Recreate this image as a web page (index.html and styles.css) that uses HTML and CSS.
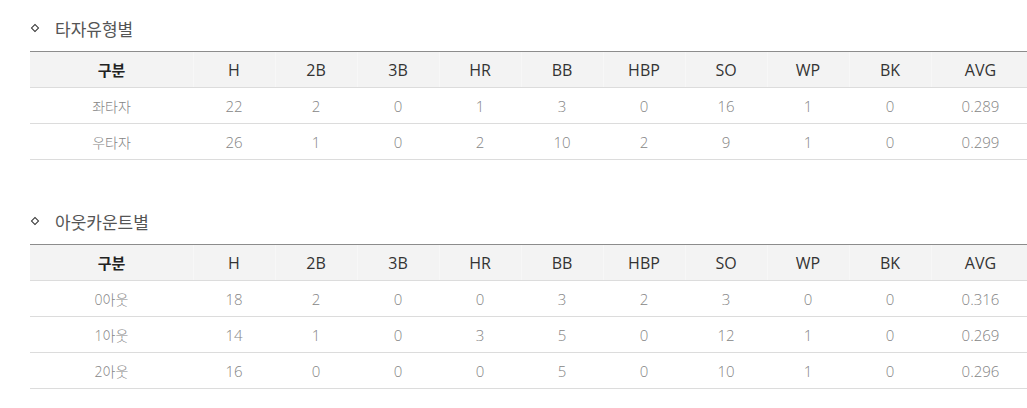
FILE: index.html
```html
<!DOCTYPE html>
<html lang="ko">
<head>
<meta charset="utf-8">
<link rel="stylesheet" href="styles.css">
</head>
<body>
<div class="page">
  <section class="block">
    <h3 class="title"><span class="bullet"></span>타자유형별</h3>
    <table class="stats">
      <colgroup><col class="w-name"><col span="9" class="w-num"><col class="w-avg"></colgroup>
      <thead>
        <tr><th class="c-name">구분</th><th>H</th><th>2B</th><th>3B</th><th>HR</th><th>BB</th><th>HBP</th><th>SO</th><th>WP</th><th>BK</th><th>AVG</th></tr>
      </thead>
      <tbody>
        <tr><td class="c-kr">좌타자</td><td>22</td><td>2</td><td>0</td><td>1</td><td>3</td><td>0</td><td>16</td><td>1</td><td>0</td><td>0.289</td></tr>
        <tr><td class="c-kr">우타자</td><td>26</td><td>1</td><td>0</td><td>2</td><td>10</td><td>2</td><td>9</td><td>1</td><td>0</td><td>0.299</td></tr>
      </tbody>
    </table>
  </section>
  <section class="block">
    <h3 class="title"><span class="bullet"></span>아웃카운트별</h3>
    <table class="stats">
      <colgroup><col class="w-name"><col span="9" class="w-num"><col class="w-avg"></colgroup>
      <thead>
        <tr><th class="c-name">구분</th><th>H</th><th>2B</th><th>3B</th><th>HR</th><th>BB</th><th>HBP</th><th>SO</th><th>WP</th><th>BK</th><th>AVG</th></tr>
      </thead>
      <tbody>
        <tr><td class="c-kr">0아웃</td><td>18</td><td>2</td><td>0</td><td>0</td><td>3</td><td>2</td><td>3</td><td>0</td><td>0</td><td>0.316</td></tr>
        <tr><td class="c-kr">1아웃</td><td>14</td><td>1</td><td>0</td><td>3</td><td>5</td><td>0</td><td>12</td><td>1</td><td>0</td><td>0.269</td></tr>
        <tr><td class="c-kr">2아웃</td><td>16</td><td>0</td><td>0</td><td>0</td><td>5</td><td>0</td><td>10</td><td>1</td><td>0</td><td>0.296</td></tr>
      </tbody>
    </table>
  </section>
</div>
</body>
</html>
```

FILE: styles.css
```css
html, body {
  margin: 0;
  padding: 0;
  background: #fff;
  overflow: hidden;
}
body {
  font-family: "Open Sans", "Noto Sans CJK KR", sans-serif;
  color: #333;
}
.page {
  width: 1000px;
  padding: 16px 0 0 30px;
}
.block {
  margin-bottom: 49px;
}
.block:last-child {
  margin-bottom: 0;
}
.title {
  display: flex;
  align-items: center;
  margin: 0 0 11px 0;
  height: 24px;
  font-size: 17px;
  font-weight: 400;
  color: #555;
  font-family: "Noto Sans CJK KR", sans-serif;
}
.bullet {
  display: inline-block;
  width: 4px;
  height: 4px;
  border: 1px solid #333;
  transform: rotate(45deg);
  margin: 0 17px 0 2px;
}
.stats {
  width: 1000px;
  border-collapse: collapse;
  table-layout: fixed;
  border-top: 1px solid #8c8c8c;
}
.w-name { width: 163px; }
.w-num { width: 82px; }
.w-avg { width: 99px; }
.stats th {
  height: 35px;
  padding: 0;
  background: #f3f3f3;
  font-weight: 400;
  font-size: 16px;
  color: #333;
  border-bottom: 1px solid #dcdcdc;
  box-shadow: inset 1px 0 #f7f7f7;
  text-align: center;
}
.stats th:first-child { box-shadow: none; }
.stats th.c-name {
  font-family: "Noto Sans CJK KR", sans-serif;
  font-size: 15px;
  font-weight: 700;
  color: #222;
}
.stats td {
  height: 35px;
  padding: 0;
  text-align: center;
  font-size: 15px;
  font-weight: 300;
  color: #858585;
  border-bottom: 1px solid #dcdcdc;
}
.stats td.c-kr {
  font-size: 14px;
}
```
